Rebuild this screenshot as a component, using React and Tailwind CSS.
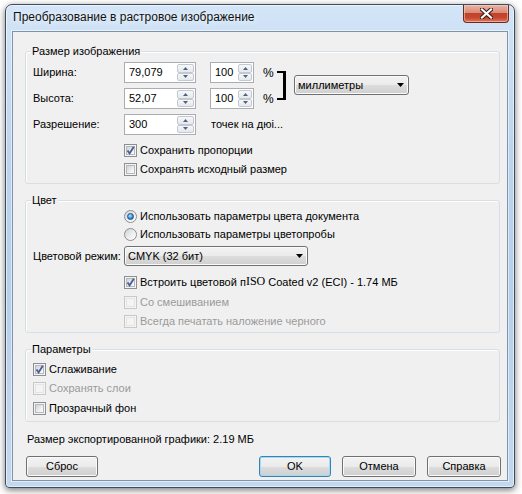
import React from "react";

function Arrow({ up, color = "#4d6185", w = 5, h = 3 }) {
  return (
    <svg width={w} height={h} viewBox={`0 0 ${w} ${h}`} className="block">
      <path d={up ? `M0 ${h} L${w / 2} 0 L${w} ${h}Z` : `M0 0 L${w} 0 L${w / 2} ${h}Z`} fill={color} />
    </svg>
  );
}

function SpinBtn({ up }) {
  return (
    <div className="flex-1 flex items-center justify-center rounded-[2px] border border-[#c3c9d2] bg-[linear-gradient(#f7f7f7,#e6e8eb)]">
      <Arrow up={up} />
    </div>
  );
}

function SpinInput({ value, w, sw }) {
  return (
    <div className={`flex h-[21px] ${w} shrink-0 border border-[#abadb3] bg-white`}>
      <div className="flex-1 pl-[4px] leading-[19px] text-black">{value}</div>
      <div className={`flex flex-col ${sw} py-[1px] pr-[1px]`}>
        <SpinBtn up />
        <SpinBtn />
      </div>
    </div>
  );
}

function Check({ checked, disabled }) {
  return (
    <div
      className={`w-[13px] h-[13px] shrink-0 border p-[1px] ${
        disabled ? "border-[#c8c8c8] bg-[#f4f4f4]" : "border-[#8e8f8f] bg-[#f4f4f4]"
      }`}
    >
      <div
        className={`w-full h-full ${
          disabled
            ? "border border-[#e4e4e4] bg-[#f4f4f4]"
            : "border border-[#b5b8bd] bg-[linear-gradient(135deg,#cfd2d6,#f3f3f3_70%,#fbfbfb)]"
        } relative`}
      >
        {checked && (
          <svg width="11" height="11" viewBox="0 0 11 11" className="absolute left-[-2px] top-[-2px]">
            <path d="M2.5 5.5 L4.6 8.4 L8.8 1.8" stroke="#4a5f97" strokeWidth="1.9" fill="none" />
          </svg>
        )}
      </div>
    </div>
  );
}

function Radio({ checked }) {
  return (
    <div className="w-[13px] h-[13px] shrink-0 rounded-full border border-[#8e8f8f] bg-[linear-gradient(135deg,#cfd2d6,#f6f6f6_70%,#ffffff)] flex items-center justify-center">
      {checked && (
        <div className="w-[7px] h-[7px] rounded-full border border-[#1f4f86] bg-[radial-gradient(circle_at_40%_35%,#b7ecff,#3c8fd8_55%,#1a4f8e)]" />
      )}
    </div>
  );
}

function Combo({ label, w }) {
  return (
    <div
      className={`flex items-center h-[20px] ${w} shrink-0 rounded-[3px] border border-[#707070] bg-[linear-gradient(#f2f2f2,#ebebeb_50%,#dddddd_50%,#cfcfcf)] shadow-[inset_0_0_0_1px_#fbfbfb] pl-[3px] pr-[4px]`}
    >
      <span className="flex-1 leading-[18px] text-black">{label}</span>
      <Arrow up={false} color="#000" w={7} h={4} />
    </div>
  );
}

function Button({ label, def, w }) {
  return (
    <div
      className={`flex items-center justify-center h-[21px] ${w} rounded-[3px] border ${
        def
          ? "border-[#3c7fb1] shadow-[inset_0_0_0_1px_#9fdcf8]"
          : "border-[#707070] shadow-[inset_0_0_0_1px_#fbfbfb]"
      } bg-[linear-gradient(#f2f2f2,#ebebeb_50%,#dddddd_50%,#cfcfcf)] text-black leading-[19px]`}
    >
      {label}
    </div>
  );
}

function Group({ title, h, children }) {
  return (
    <div className={`relative ml-[12px] mr-[7px] ${h} rounded-[3px] border border-[#d5dfe5] shadow-[inset_1px_1px_0_#fff]`}>
      <span className="absolute left-[5px] top-[-9px] px-[1px] bg-[#f0f0f0] leading-[16px] text-black">{title}</span>
      {children}
    </div>
  );
}

function Row({ h, children, cls = "" }) {
  return <div className={`flex items-center ${h} ${cls}`}>{children}</div>;
}

export default function App() {
  return (
    <div className="w-[522px] h-[494px] bg-white overflow-hidden font-['Liberation_Sans',Arial,sans-serif] text-[11px] text-black">
      <div className="ml-[5px] mt-[4px] w-[510px] h-[484px] rounded-t-[7px] rounded-b-[4px] border border-[#3d4b5b] bg-[linear-gradient(#d3e5f7,#bcd4ee_30%,#b6cfea_60%,#c2d8ef)] shadow-[0_2px_7px_rgba(0,0,0,0.55),inset_0_0_0_1px_rgba(255,255,255,0.55)] flex flex-col">
        <div className="h-[26px] flex items-start justify-between pr-[5px]">
          <span className="pl-[7px] pt-[4px] leading-[16px] text-[12px] text-[#111] [text-shadow:0_0_6px_#fff]">
            Преобразование в растровое изображение
          </span>
          <div className="w-[46px] h-[18px] rounded-b-[4px] border border-t-0 border-[#6b2a1f] bg-[linear-gradient(#eab3a4,#d98c77_45%,#c1412a_50%,#c7482f_75%,#e07a60)] shadow-[inset_0_0_0_1px_rgba(255,220,210,0.5)] flex items-center justify-center">
            <svg width="13" height="11" viewBox="0 0 13 11">
              <path d="M2 1.5 L11 9.5 M11 1.5 L2 9.5" stroke="#3a1a14" strokeWidth="4.2" strokeLinecap="square" fill="none" />
              <path d="M2 1.5 L11 9.5 M11 1.5 L2 9.5" stroke="#ffffff" strokeWidth="2.2" strokeLinecap="square" fill="none" />
            </svg>
          </div>
        </div>
        <div className="mx-[6px] h-[450px] border border-[#8093a8] bg-[#f0f0f0] shadow-[0_0_0_1px_rgba(255,255,255,0.5)]">
          <div className="h-[19px]" />
          <Group title="Размер изображения" h="h-[133px]">
            <div className="pt-[10px] pl-[7px]">
              <div className="flex items-center">
                <div className="flex flex-col gap-[5px]">
                  <div className="flex items-center">
                    <span className="w-[91px]">Ширина:</span>
                    <SpinInput value="79,079" w="w-[72px]" sw="w-[18px]" />
                    <div className="ml-[14px]">
                      <SpinInput value="100" w="w-[44px]" sw="w-[15px]" />
                    </div>
                    <span className="ml-[9px] w-[14px] text-[12px]">%</span>
                  </div>
                  <div className="flex items-center">
                    <span className="w-[91px]">Высота:</span>
                    <SpinInput value="52,07" w="w-[72px]" sw="w-[18px]" />
                    <div className="ml-[14px]">
                      <SpinInput value="100" w="w-[44px]" sw="w-[15px]" />
                    </div>
                    <span className="ml-[9px] w-[14px] text-[12px]">%</span>
                  </div>
                </div>
                <div className="w-[9px] h-[29px] border-t-2 border-b-2 border-r-[3px] border-black" />
                <div className="ml-[8px] -mt-[2px]">
                  <Combo label="миллиметры" w="w-[115px]" />
                </div>
              </div>
              <div className="flex items-center mt-[5px]">
                <span className="w-[91px]">Разрешение:</span>
                <SpinInput value="300" w="w-[72px]" sw="w-[18px]" />
                <span className="ml-[15px]">точек на дюі...</span>
              </div>
              <div className="pl-[91px] mt-[6px]">
                <Row h="h-[19px]">
                  <Check checked />
                  <span className="ml-[3px]">Сохранить пропорции</span>
                </Row>
                <Row h="h-[19px]">
                  <Check />
                  <span className="ml-[3px]">Сохранять исходный размер</span>
                </Row>
              </div>
            </div>
          </Group>
          <div className="h-[16px]" />
          <Group title="Цвет" h="h-[133px]">
            <div className="pt-[6px] pl-[7px]">
              <div className="pl-[91px]">
                <Row h="h-[18px]">
                  <Radio checked />
                  <span className="ml-[3px]">Использовать параметры цвета документа</span>
                </Row>
                <Row h="h-[18px]">
                  <Radio />
                  <span className="ml-[3px]">Использовать параметры цветопробы</span>
                </Row>
              </div>
              <div className="flex items-center mt-[3px]">
                <span className="w-[91px]">Цветовой режим:</span>
                <Combo label="CMYK (32 бит)" w="w-[184px]" />
              </div>
              <div className="pl-[91px] mt-[6px]">
                <Row h="h-[20px]">
                  <Check checked />
                  <span className="ml-[3px]">
                    Встроить цветовой п
                    <span className="font-['Liberation_Serif',serif] text-[12px] relative top-[-1px]">ISO</span> Coated v2 (ECI) - 1.74 МБ
                  </span>
                </Row>
                <Row h="h-[20px]">
                  <Check disabled />
                  <span className="ml-[3px] text-[#9a9a9a]">Со смешиванием</span>
                </Row>
                <Row h="h-[19px]">
                  <Check disabled />
                  <span className="ml-[3px] text-[#9a9a9a]">Всегда печатать наложение черного</span>
                </Row>
              </div>
            </div>
          </Group>
          <div className="h-[16px]" />
          <Group title="Параметры" h="h-[73px]">
            <div className="pt-[9px] pl-[7px]">
              <Row h="h-[20px]">
                <Check checked />
                <span className="ml-[3px]">Сглаживание</span>
              </Row>
              <Row h="h-[19px]">
                <Check disabled />
                <span className="ml-[3px] text-[#9a9a9a]">Сохранять слои</span>
              </Row>
              <Row h="h-[20px]">
                <Check />
                <span className="ml-[3px]">Прозрачный фон</span>
              </Row>
            </div>
          </Group>
          <div className="mt-[9px] ml-[14px] h-[16px] leading-[16px]">Размер экспортированной графики: 2.19 МБ</div>
          <div className="mt-[9px] flex items-center pl-[13px] pr-[6px]">
            <Button label="Сброс" w="w-[72px]" />
            <div className="flex-1" />
            <Button label="OK" def w="w-[72px]" />
            <div className="w-[11px]" />
            <Button label="Отмена" w="w-[74px]" />
            <div className="w-[11px]" />
            <Button label="Справка" w="w-[74px]" />
          </div>
        </div>
      </div>
    </div>
  );
}
